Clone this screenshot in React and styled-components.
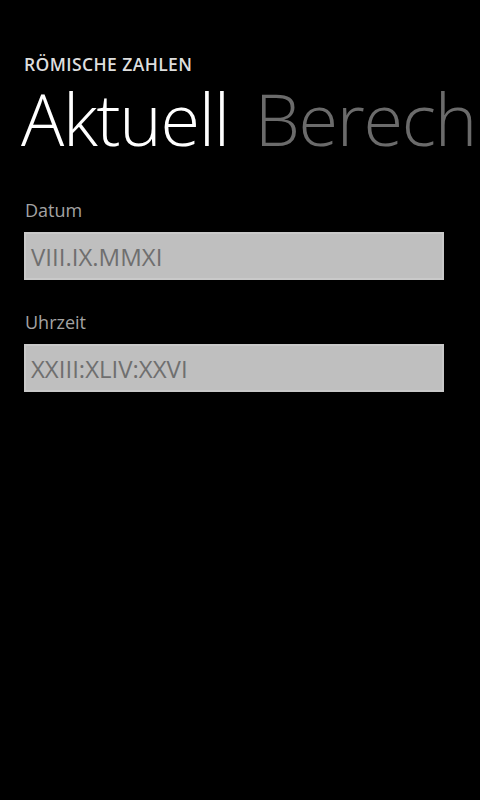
import React from "react";
import styled, { createGlobalStyle } from "styled-components";

const GlobalStyle = createGlobalStyle`
    html, body {
        margin: 0;
        padding: 0;
        background: #000;
    }
    body {
        font-family: "Open Sans", "Noto Sans", sans-serif;
        overflow: hidden;
    }
`;

const Page = styled.div`
    width: 480px;
    height: 800px;
    background: #000;
    overflow: hidden;
`;

const AppTitle = styled.div`
    padding: 53px 0 0 24px;
    font-size: 17.5px;
    font-weight: 600;
    letter-spacing: 0.4px;
    color: #dedede;
    line-height: 22px;
`;

const PivotHeaders = styled.div`
    display: flex;
    gap: 26px;
    padding-left: 21px;
    margin-top: 3px;
    white-space: nowrap;
`;

const PivotHeader = styled.div`
    font-size: 72px;
    font-weight: 300;
    line-height: 80px;
    letter-spacing: -1.3px;
    color: ${(p) => (p.$active ? "#ffffff" : "#6b6b6b")};
`;

const Content = styled.div`
    display: flex;
    flex-direction: column;
    gap: 30px;
    padding: 40px 36px 0 24px;
`;

const Field = styled.div`
    display: flex;
    flex-direction: column;
    gap: 10px;
`;

const Label = styled.div`
    font-size: 18px;
    line-height: 24px;
    color: #a3a3a3;
    padding-left: 1px;
`;

const TextBox = styled.div`
    height: 44px;
    background: #bfbfbf;
    border: 2px solid #c9c9c9;
    display: flex;
    align-items: center;
    padding-left: 5px;
    font-size: 24px;
    color: #6f6f6f;
`;

const fields = [
    { label: "Datum", value: "VIII.IX.MMXI" },
    { label: "Uhrzeit", value: "XXIII:XLIV:XXVI" },
];

const App = () => {
    return (
        <Page>
            <GlobalStyle />
            <AppTitle>RÖMISCHE ZAHLEN</AppTitle>
            <PivotHeaders>
                <PivotHeader $active>Aktuell</PivotHeader>
                <PivotHeader>Berechnen</PivotHeader>
            </PivotHeaders>
            <Content>
                {fields.map((f) => (
                    <Field key={f.label}>
                        <Label>{f.label}</Label>
                        <TextBox>{f.value}</TextBox>
                    </Field>
                ))}
            </Content>
        </Page>
    );
};

export default App;
